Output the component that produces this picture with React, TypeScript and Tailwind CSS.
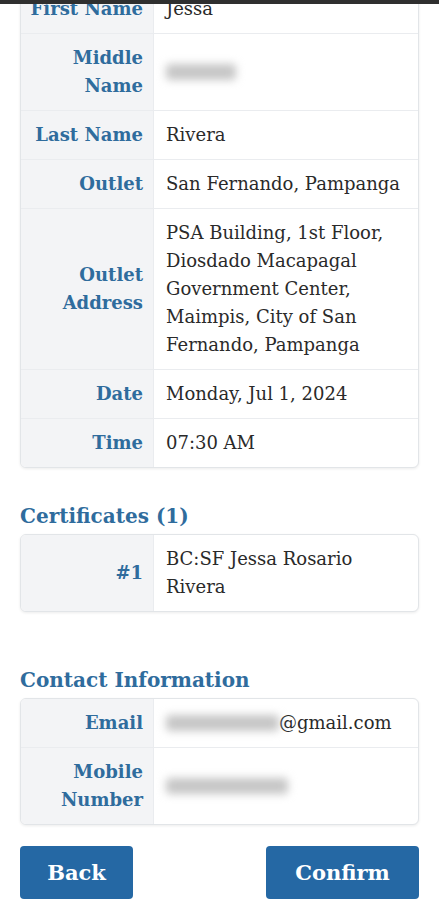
import React from "react";

interface Row {
  label: React.ReactNode;
  value: React.ReactNode;
}

const Blur = ({ w }: { w: number }) => (
  <span
    className="inline-block h-[16px] align-middle rounded-sm bg-[#c6c6c6] blur-[4px]"
    style={{ width: w }}
  />
);

const InfoTable = ({ rows }: { rows: Row[] }) => (
  <div className="rounded-md border border-[#e2e5e8] bg-white shadow-[0_1px_3px_rgba(0,0,0,0.08)] overflow-hidden">
    {rows.map((row, i) => (
      <div key={i} className={"flex " + (i > 0 ? "border-t border-[#eaecef]" : "")}>
        <div className="w-[133px] shrink-0 bg-[#f3f4f6] border-r border-[#eaecef] py-[10px] pr-[10px] pl-2 flex items-center justify-end text-right font-bold text-[#2f6c9d]">
          {row.label}
        </div>
        <div className="flex-1 py-[10px] pl-[12px] pr-3 flex items-center text-[#2a2a2a]">
          {row.value}
        </div>
      </div>
    ))}
  </div>
);

export default function App() {
  const details: Row[] = [
    { label: "First Name", value: "Jessa" },
    { label: <>Middle<br />Name</>, value: <Blur w={70} /> },
    { label: "Last Name", value: "Rivera" },
    { label: "Outlet", value: "San Fernando, Pampanga" },
    {
      label: <>Outlet<br />Address</>,
      value: "PSA Building, 1st Floor, Diosdado Macapagal Government Center, Maimpis, City of San Fernando, Pampanga",
    },
    { label: "Date", value: "Monday, Jul 1, 2024" },
    { label: "Time", value: "07:30 AM" },
  ];

  const certificates: Row[] = [
    { label: "#1", value: "BC:SF Jessa Rosario Rivera" },
  ];

  const contact: Row[] = [
    {
      label: "Email",
      value: (
        <span className="flex items-center">
          <Blur w={113} />
          <span>@gmail.com</span>
        </span>
      ),
    },
    { label: <>Mobile<br />Number</>, value: <Blur w={122} /> },
  ];

  return (
    <main
      className="relative w-[439px] h-[900px] overflow-hidden bg-white text-[18px] leading-[28px]"
      style={{ fontFamily: '"DejaVu Serif", "Liberation Serif", serif' }}
    >
      <div className="absolute top-0 left-0 right-0 h-[4px] bg-[#2f2f2f] z-10" />
      <div className="px-[20px] -mt-[16px]">
        <InfoTable rows={details} />

        <h2 className="mt-[34px] mb-[4px] text-[20px] leading-[28px] font-bold text-[#2f6c9d]">
          Certificates (1)
        </h2>
        <InfoTable rows={certificates} />

        <h2 className="mt-[54px] mb-[4px] text-[20px] leading-[28px] font-bold text-[#2f6c9d]">
          Contact Information
        </h2>
        <InfoTable rows={contact} />

        <div className="mt-[21px] flex justify-between">
          <button className="w-[113px] h-[53px] rounded bg-[#2568a4] text-white font-bold text-[21px]">
            Back
          </button>
          <button className="w-[153px] h-[53px] rounded bg-[#2568a4] text-white font-bold text-[21px]">
            Confirm
          </button>
        </div>
      </div>
    </main>
  );
}
